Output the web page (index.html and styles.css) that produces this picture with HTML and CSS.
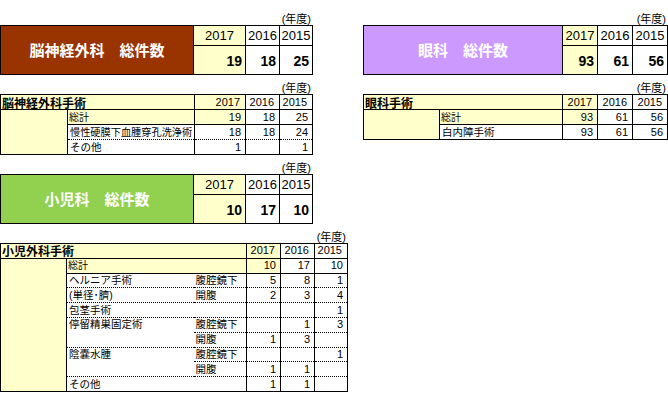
FILE: index.html
```html
<!DOCTYPE html>
<html lang="ja">
<head>
<meta charset="utf-8">
<title>手術件数</title>
<link rel="stylesheet" href="styles.css">
</head>
<body>
<div class="page">
  <div class="col">
    <div class="sec">
      <div class="unit">(年度)</div>
      <table class="blk w313">
        <colgroup><col class="k193"><col class="k52"><col class="k34"><col class="k33"></colgroup>
        <tr class="h"><td class="title brown" rowspan="2">脳神経外科　総件数</td><td class="yr y">2017</td><td class="yr">2016</td><td class="yr">2015</td></tr>
        <tr class="v"><td class="num y">19</td><td class="num">18</td><td class="num">25</td></tr>
      </table>
    </div>
    <div class="sec">
      <div class="unit">(年度)</div>
      <table class="tbl w313">
        <colgroup><col class="k67"><col class="k127"><col class="k51"><col class="k34"><col class="k33"></colgroup>
        <tr class="s"><td colspan="2" class="lab y">脳神経外科手術</td><td class="yh y">2017</td><td class="yh">2016</td><td class="yh">2015</td></tr>
        <tr class="s"><td rowspan="3" class="y"></td><td class="t y sm">総計</td><td class="n y">19</td><td class="n">18</td><td class="n">25</td></tr>
        <tr class="d"><td class="t tight">慢性硬膜下血腫穿孔洗浄術</td><td class="n">18</td><td class="n">18</td><td class="n">24</td></tr>
        <tr><td class="t">その他</td><td class="n">1</td><td class="n"></td><td class="n">1</td></tr>
      </table>
    </div>
    <div class="sec">
      <div class="unit">(年度)</div>
      <table class="blk w313">
        <colgroup><col class="k193"><col class="k52"><col class="k34"><col class="k33"></colgroup>
        <tr class="h"><td class="title green" rowspan="2">小児科　総件数</td><td class="yr y">2017</td><td class="yr">2016</td><td class="yr">2015</td></tr>
        <tr class="v"><td class="num y">10</td><td class="num">17</td><td class="num">10</td></tr>
      </table>
    </div>
    <div class="sec">
      <div class="unit">(年度)</div>
      <table class="tbl ped w348">
        <colgroup><col class="k66"><col class="k127"><col class="k53"><col class="k34"><col class="k34"><col class="k33"></colgroup>
        <tr class="s"><td colspan="3" class="lab y">小児外科手術</td><td class="yh y">2017</td><td class="yh">2016</td><td class="yh">2015</td></tr>
        <tr class="s"><td rowspan="9" class="y"></td><td colspan="2" class="t y sm">総計</td><td class="n y">10</td><td class="n">17</td><td class="n">10</td></tr>
        <tr class="d"><td class="t a">ヘルニア手術</td><td class="t b">腹腔鏡下</td><td class="n">5</td><td class="n">8</td><td class="n">1</td></tr>
        <tr class="d"><td class="t a">(単径･臍)</td><td class="t b">開腹</td><td class="n">2</td><td class="n">3</td><td class="n">4</td></tr>
        <tr class="d"><td colspan="2" class="t">包茎手術</td><td class="n"></td><td class="n"></td><td class="n">1</td></tr>
        <tr class="d"><td rowspan="2" class="t a top">停留精巣固定術</td><td class="t b">腹腔鏡下</td><td class="n"></td><td class="n">1</td><td class="n">3</td></tr>
        <tr class="d"><td class="t b">開腹</td><td class="n">1</td><td class="n">3</td><td class="n"></td></tr>
        <tr class="d"><td rowspan="2" class="t a top">陰嚢水腫</td><td class="t b">腹腔鏡下</td><td class="n"></td><td class="n"></td><td class="n">1</td></tr>
        <tr class="d"><td class="t b">開腹</td><td class="n">1</td><td class="n">1</td><td class="n"></td></tr>
        <tr><td colspan="2" class="t">その他</td><td class="n">1</td><td class="n">1</td><td class="n"></td></tr>
      </table>
    </div>
  </div>
  <div class="col">
    <div class="sec">
      <div class="unit">(年度)</div>
      <table class="blk w305">
        <colgroup><col class="k199"><col class="k35"><col class="k35"><col class="k35"></colgroup>
        <tr class="h"><td class="title purple" rowspan="2">眼科　総件数</td><td class="yr y">2017</td><td class="yr">2016</td><td class="yr">2015</td></tr>
        <tr class="v"><td class="num y">93</td><td class="num">61</td><td class="num">56</td></tr>
      </table>
    </div>
    <div class="sec">
      <div class="unit">(年度)</div>
      <table class="tbl w305">
        <colgroup><col class="k76"><col class="k123"><col class="k35"><col class="k35"><col class="k35"></colgroup>
        <tr class="s"><td colspan="2" class="lab y">眼科手術</td><td class="yh y">2017</td><td class="yh">2016</td><td class="yh">2015</td></tr>
        <tr class="s"><td rowspan="2" class="y"></td><td class="t y sm">総計</td><td class="n y">93</td><td class="n">61</td><td class="n">56</td></tr>
        <tr><td class="t">白内障手術</td><td class="n">93</td><td class="n">61</td><td class="n">56</td></tr>
      </table>
    </div>
  </div>
</div>
</body>
</html>
```

FILE: styles.css
```css
* { box-sizing: border-box; }
body {
  margin: 0;
  background: #fff;
  color: #000;
  font-family: "Liberation Sans", "Noto Sans CJK JP", sans-serif;
}
.page {
  display: grid;
  grid-template-columns: 348px 305px;
  column-gap: 15px;
  padding-top: 13px;
}
.col {
  display: flex;
  flex-direction: column;
  align-items: flex-start;
  gap: 7px;
}
.sec {
  display: flex;
  flex-direction: column;
}
.unit {
  height: 12px;
  line-height: 12px;
  font-size: 11px;
  text-align: right;
  padding-right: 2px;
}
table {
  border-collapse: collapse;
  table-layout: fixed;
  border: 1px solid #000;
}
td {
  padding: 0;
  border-left: 1px solid #000;
  border-right: 1px solid #000;
  border-top: none;
  border-bottom: none;
  vertical-align: middle;
  white-space: nowrap;
  overflow: hidden;
}
.w313 { width: 313px; }
.w348 { width: 348px; }
.w305 { width: 305px; }
.k193 { width: 193px; }
.k52 { width: 52px; }
.k34 { width: 34px; }
.k33 { width: 33px; }
.k67 { width: 67px; }
.k127 { width: 127px; }
.k51 { width: 51px; }
.k66 { width: 66px; }
.k53 { width: 53px; }
.k199 { width: 199px; }
.k35 { width: 35px; }
.k76 { width: 76px; }
.k123 { width: 123px; }

.y { background: #ffffcc; }
.brown { background: #993300; }
.green { background: #92d050; }
.purple { background: #cc99ff; }

/* summary blocks */
.blk td { line-height: 16px; }
.blk tr.h td { height: 20px; border-bottom: 1px solid #000; }
.blk tr.v td { height: 29px; }
.blk .title {
  color: #fff;
  font-family: "Noto Sans CJK JP", sans-serif;
  font-weight: 700;
  font-size: 15px;
  text-align: center;
}
.blk .yr {
  font-size: 13px;
  text-align: center;
}
.blk .num {
  font-size: 14px;
  font-weight: 700;
  text-align: right;
  padding-right: 3px;
  vertical-align: bottom;
  padding-bottom: 5px;
}

/* detail tables */
.tbl td { height: 15px; line-height: 13px; }
.tbl.ped td { height: 14.8px; }
.tbl tr.s td { border-bottom: 1px solid #000; }
.tbl tr.d td { border-bottom: 1px dotted #000; }
.tbl .lab {
  font-family: "Noto Sans CJK JP", sans-serif;
  font-weight: 700;
  font-size: 12px;
  padding-left: 1px;
}
.tbl .yh {
  font-size: 11px;
  text-align: right;
  padding-right: 5px;
}
.tbl .t {
  font-size: 10.5px;
  padding-left: 2px;
}
.tbl .sm { font-size: 10px; padding-left: 1px; }
.tbl .tight { font-size: 10.2px; }
.tbl .a { border-right: none; }
.tbl .b { border-left: none; }
.tbl .top { vertical-align: top; }
.tbl .n {
  font-size: 11px;
  text-align: right;
  padding-right: 4px;
}
```
